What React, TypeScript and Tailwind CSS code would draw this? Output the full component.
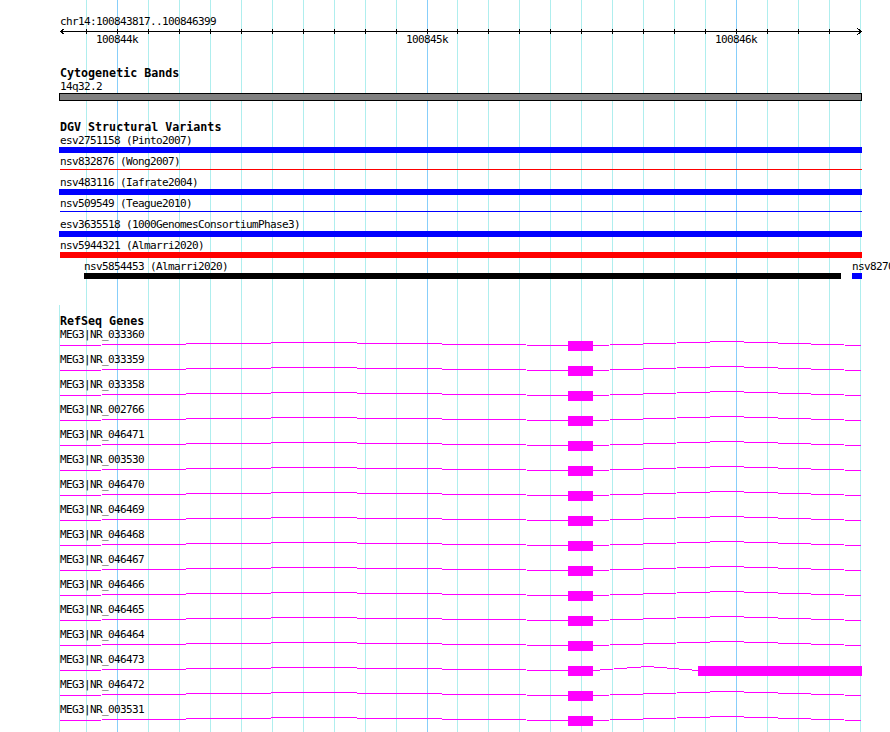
import React from "react";

const LEFT = 59;
const TRACK_W = 803;

// grid x positions every 100bp (k = -1 .. 24)
const GRID = Array.from({ length: 26 }, (_, i) => ({
  x: 117 + Math.round((i - 1) * 30.95),
  major: i - 1 === 0 || i - 1 === 10 || i - 1 === 20,
}));

const MAJOR_LABELS = [
  { x: 117, t: "100844k" },
  { x: 427, t: "100845k" },
  { x: 736, t: "100846k" },
];

type DgvRow = {
  label: string;
  color: string;
  kind: "bar" | "line";
  x1: number;
  x2: number;
};

const DGV: DgvRow[] = [
  { label: "esv2751158 (Pinto2007)", color: "#0000ff", kind: "bar", x1: 59, x2: 861 },
  { label: "nsv832876 (Wong2007)", color: "#ff0000", kind: "line", x1: 60, x2: 861 },
  { label: "nsv483116 (Iafrate2004)", color: "#0000ff", kind: "bar", x1: 59, x2: 861 },
  { label: "nsv509549 (Teague2010)", color: "#0000ff", kind: "line", x1: 60, x2: 861 },
  { label: "esv3635518 (1000GenomesConsortiumPhase3)", color: "#0000ff", kind: "bar", x1: 59, x2: 861 },
  { label: "nsv5944321 (Almarri2020)", color: "#ff0000", kind: "bar", x1: 60, x2: 861 },
];

const GENES = [
  "NR_033360",
  "NR_033359",
  "NR_033358",
  "NR_002766",
  "NR_046471",
  "NR_003530",
  "NR_046470",
  "NR_046469",
  "NR_046468",
  "NR_046467",
  "NR_046466",
  "NR_046465",
  "NR_046464",
  "NR_046473",
  "NR_046472",
  "NR_003531",
];

const MAGENTA = "#ff00ff";

function Title({ children, className = "" }: { children: React.ReactNode; className?: string }) {
  return (
    <div className={`h-[13px] pl-[1px] text-[11.67px] leading-[13px] font-bold whitespace-nowrap ${className}`}>
      {children}
    </div>
  );
}

function Label({ children }: { children: React.ReactNode }) {
  return (
    <div className="h-[13px] pl-[1px] text-[11px] tracking-[-0.62px] leading-[13px] whitespace-nowrap">
      {children}
    </div>
  );
}

function Ruler() {
  return (
    <svg width={TRACK_W} height={18} className="block shrink-0" shapeRendering="crispEdges">
      <line x1={1} y1={3.5} x2={803} y2={3.5} stroke="#000" strokeWidth={1} />
      {GRID.filter((g) => g.x < 858).map((g) => (
        <line key={g.x} x1={g.x - LEFT + 0.5} y1={1} x2={g.x - LEFT + 0.5} y2={6} stroke="#000" strokeWidth={1} />
      ))}
      <polyline points="5.5,0.5 1.5,3.5 5.5,6.5" fill="none" stroke="#000" strokeWidth={1} />
      <polyline points="798.5,0.5 802.5,3.5 798.5,6.5" fill="none" stroke="#000" strokeWidth={1} />
      {MAJOR_LABELS.map((m) => (
        <text
          key={m.t}
          x={m.x - LEFT}
          y={15}
          fontSize={11}
          letterSpacing={-0.62}
          textAnchor="middle"
          fill="#000"
          style={{ fontFamily: "'DejaVu Sans Mono', 'Liberation Mono', monospace" }}
        >
          {m.t}
        </text>
      ))}
    </svg>
  );
}

function DgvTrackRow({ row }: { row: DgvRow }) {
  return (
    <div className="flex flex-col h-[21px]">
      <Label>{row.label}</Label>
      <svg width={TRACK_W} height={6} className="block shrink-0" shapeRendering="crispEdges">
        {row.kind === "bar" ? (
          <rect x={row.x1 - LEFT} y={0} width={row.x2 - row.x1 + 1} height={6} fill={row.color} />
        ) : (
          <line x1={row.x1 - LEFT} y1={1.5} x2={row.x2 - LEFT + 1} y2={1.5} stroke={row.color} strokeWidth={1} />
        )}
      </svg>
    </div>
  );
}

function GeneRow({ id, special }: { id: string; special?: boolean }) {
  return (
    <div className="flex flex-col h-[25px]">
      <Label>MEG3|{id}</Label>
      <svg width={TRACK_W} height={10} className="block shrink-0" shapeRendering="crispEdges">
        <polyline points="1,4.5 255,1.5 509,4.5" fill="none" stroke={MAGENTA} strokeWidth={1} />
        <rect x={509} y={0} width={25} height={10} fill={MAGENTA} />
        {special ? (
          <>
            <polyline points="534,4.5 589,0.5 639,4.5" fill="none" stroke={MAGENTA} strokeWidth={1} />
            <rect x={639} y={0} width={164} height={10} fill={MAGENTA} />
          </>
        ) : (
          <polyline points="534,4.5 668,0.5 802,4.5" fill="none" stroke={MAGENTA} strokeWidth={1} />
        )}
      </svg>
    </div>
  );
}

export default function App() {
  return (
    <div className="relative w-[890px] h-[732px] overflow-hidden bg-white text-black font-['DejaVu_Sans_Mono','Liberation_Mono',monospace]">
      {/* background grid */}
      <svg className="absolute inset-0" width={890} height={732} shapeRendering="crispEdges">
        {GRID.map((g) => (
          <line
            key={g.x}
            x1={g.x + 0.5}
            y1={0}
            x2={g.x + 0.5}
            y2={732}
            stroke={g.major ? "#87cefa" : "#afeeee"}
            strokeWidth={1}
          />
        ))}
        <line x1={59.5} y1={305} x2={59.5} y2={732} stroke="#afeeee" strokeWidth={1} />
      </svg>

      <div className="relative flex flex-col pl-[59px] pt-[15px]">
        {/* ruler */}
        <Label>chr14:100843817..100846399</Label>
        <Ruler />

        {/* cytogenetic bands */}
        <Title className="mt-[21px]">Cytogenetic Bands</Title>
        <Label>14q32.2</Label>
        <div className="w-[803px] h-[8px] border border-black bg-[#808080]" />

        {/* DGV */}
        <Title className="mt-[20px]">DGV Structural Variants</Title>
        {DGV.map((r) => (
          <DgvTrackRow key={r.label} row={r} />
        ))}
        <div className="flex flex-col h-[21px]">
          <div className="relative h-[13px] text-[11px] tracking-[-0.62px] leading-[13px] whitespace-nowrap">
            <span className="absolute top-0" style={{ left: 84 - LEFT }}>
              nsv5854453 (Almarri2020)
            </span>
            <span className="absolute top-0" style={{ left: 852 - LEFT }}>
              nsv8270
            </span>
          </div>
          <svg width={TRACK_W} height={6} className="block shrink-0" shapeRendering="crispEdges">
            <rect x={84 - LEFT} y={0} width={757} height={6} fill="#000" />
            <rect x={852 - LEFT} y={0} width={10} height={6} fill="#0000ff" />
          </svg>
        </div>

        {/* RefSeq */}
        <Title className="mt-[34px]">RefSeq Genes</Title>
        {GENES.map((g) => (
          <GeneRow key={g} id={g} special={g === "NR_046473"} />
        ))}
      </div>
    </div>
  );
}
